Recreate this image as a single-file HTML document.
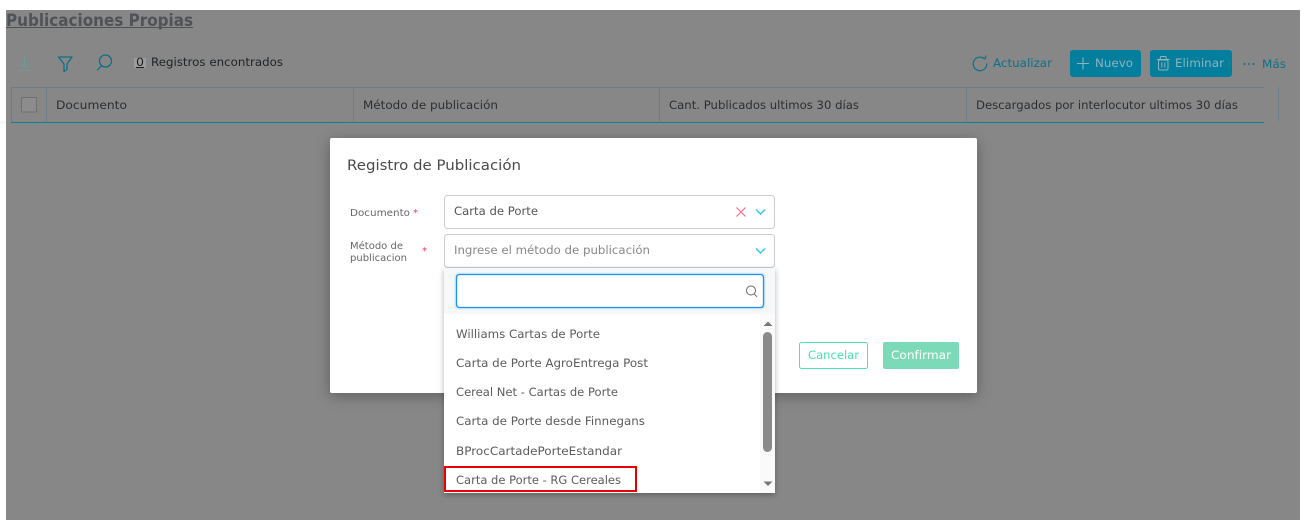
<!DOCTYPE html>
<html lang="es">
<head>
<meta charset="utf-8">
<title>Publicaciones Propias</title>
<style>
html,body{margin:0;padding:0;background:#fff;width:1307px;height:525px;overflow:hidden}
svg{display:block}
text{font-family:"DejaVu Sans",sans-serif;font-size:11.5px}
</style>
</head>
<body>
<svg width="1307" height="525" viewBox="0 0 1307 525" xmlns="http://www.w3.org/2000/svg">
<defs>
<filter id="ms" x="-10%" y="-10%" width="120%" height="125%"><feDropShadow dx="0" dy="3" stdDeviation="7" flood-color="#000" flood-opacity=".3"/></filter>
<filter id="ds" x="-10%" y="-10%" width="120%" height="120%"><feDropShadow dx="0" dy="2" stdDeviation="3" flood-color="#000" flood-opacity=".3"/></filter>
</defs>
<rect width="1307" height="525" fill="#fff"/>
<rect x="6" y="10" width="1294" height="510" fill="#878787"/>

<!-- Page title -->
<text x="6" y="26" font-weight="700" fill="#4f5357" textLength="187" lengthAdjust="spacingAndGlyphs" style="font-size:16.500px">Publicaciones Propias</text>
<rect x="6" y="27" width="187" height="1" fill="#4f5357"/>

<!-- Toolbar left -->
<g fill="none" stroke-linecap="round" stroke-linejoin="round">
<path d="M24.500 56V67M20 62.500l4.500 4.500L29 62.500M19 70.500H30" stroke="#6f989f" stroke-width="1"/>
<path d="M58.500 57H72L67 64V69.500L64 71.500V64Z" stroke="#0c7186" stroke-width="1.300"/>
<circle cx="105.500" cy="61" r="6" stroke="#0c7186" stroke-width="1.300"/>
<path d="M101.500 65.500L97.500 70" stroke="#0c7186" stroke-width="1.300"/>
</g>
<rect x="134" y="58" width="12" height="10" fill="#9b9b9b"/>
<text x="136" y="66" fill="#1f2326" textLength="8" lengthAdjust="spacingAndGlyphs">0</text>
<rect x="136" y="67" width="8" height="1" fill="#1f2326"/>
<text x="151" y="66" fill="#1f2326" textLength="132" lengthAdjust="spacingAndGlyphs">Registros encontrados</text>

<!-- Toolbar right -->
<g fill="none" stroke="#0d7288" stroke-width="1.200" stroke-linecap="round" stroke-linejoin="round">
<path d="M984.500 58.800A6.800 6.800 0 1 0 986.800 64"/>
<path d="M981.500 57.500L985 58.800L986 56"/>
</g>
<text x="993" y="67" fill="#0d7288" textLength="59" lengthAdjust="spacingAndGlyphs">Actualizar</text>
<rect x="1070" y="50" width="71" height="27" rx="3" fill="#037e9c"/>
<path d="M1083 57.500V69.500M1077 63.500H1089" stroke="#8fb3bd" stroke-width="1.100" fill="none"/>
<text x="1095" y="67" fill="#8fb3bd" textLength="38" lengthAdjust="spacingAndGlyphs">Nuevo</text>
<rect x="1150" y="50" width="82" height="27" rx="3" fill="#037e9c"/>
<g fill="none" stroke="#8fb3bd" stroke-width="1">
<rect x="1158.500" y="60" width="9.500" height="10" rx="1.500"/>
<path d="M1157 59.500H1169.500M1160 59L1160.800 56.500H1165.700L1166.500 59M1161.800 62.500V67.500M1164.800 62.500V67.500"/>
</g>
<text x="1175" y="67" fill="#8fb3bd" textLength="49" lengthAdjust="spacingAndGlyphs">Eliminar</text>
<g fill="#0d7288"><circle cx="1244.500" cy="64" r="1"/><circle cx="1249" cy="64" r="1"/><circle cx="1253.500" cy="64" r="1"/></g>
<text x="1262" y="68" fill="#0d7288" textLength="24" lengthAdjust="spacingAndGlyphs">Más</text>

<!-- Table header -->
<rect x="11" y="87" width="1253" height="1" fill="#6d7d85"/>
<rect x="11" y="122" width="1253" height="1" fill="#0b8099"/>
<g fill="#6d7d85">
<rect x="11" y="87" width="1" height="35"/>
<rect x="46" y="87" width="1" height="35"/>
<rect x="353" y="87" width="1" height="35"/>
<rect x="659" y="87" width="1" height="35"/>
<rect x="966" y="87" width="1" height="35"/>
<rect x="1278" y="87" width="1" height="34"/>
</g>
<rect x="21.500" y="97.500" width="15" height="14.500" rx="1" fill="#8c8c8c" stroke="#6f6f6f"/>
<g fill="#2b2f33">
<text x="56" y="109" textLength="71" lengthAdjust="spacingAndGlyphs">Documento</text>
<text x="363" y="109" textLength="135" lengthAdjust="spacingAndGlyphs">Método de publicación</text>
<text x="669" y="109" textLength="190" lengthAdjust="spacingAndGlyphs">Cant. Publicados ultimos 30 días</text>
<text x="976" y="109" textLength="262" lengthAdjust="spacingAndGlyphs">Descargados por interlocutor ultimos 30 días</text>
</g>

<!-- Modal -->
<rect x="330" y="138" width="647" height="255" rx="2" fill="#fff" filter="url(#ms)"/>
<text x="347" y="170" fill="#4a4a4a" textLength="174" lengthAdjust="spacingAndGlyphs" style="font-size:14.500px">Registro de Publicación</text>

<text x="350" y="216" fill="#666" textLength="60" lengthAdjust="spacingAndGlyphs" style="font-size:10px">Documento</text>
<text x="413" y="216" fill="#f5365c" style="font-size:10px">*</text>
<text x="350" y="249" fill="#666" textLength="53" lengthAdjust="spacingAndGlyphs" style="font-size:10px">Método de</text>
<text x="350" y="261" fill="#666" textLength="57" lengthAdjust="spacingAndGlyphs" style="font-size:10px">publicacion</text>
<text x="422" y="254" fill="#f5365c" style="font-size:10px">*</text>

<rect x="444.500" y="195.500" width="330" height="33" rx="3" fill="#fff" stroke="#c9cdd1"/>
<text x="454" y="215" fill="#555" textLength="84" lengthAdjust="spacingAndGlyphs">Carta de Porte</text>
<path d="M736.500 207.500L745.500 216.500M745.500 207.500L736.500 216.500" stroke="#f5658a" stroke-width="1.100" fill="none"/>
<path d="M756 209.500L760.500 214L765 209.500" stroke="#2cc5ee" stroke-width="1.400" fill="none"/>

<rect x="444.500" y="234.500" width="330" height="33" rx="3" fill="#fff" stroke="#c9cdd1"/>
<text x="454" y="254" fill="#888" textLength="196" lengthAdjust="spacingAndGlyphs">Ingrese el método de publicación</text>
<path d="M756 248.500L760.500 253L765 248.500" stroke="#2cc5ee" stroke-width="1.400" fill="none"/>

<!-- Buttons -->
<rect x="799.500" y="342.500" width="68" height="26" rx="2" fill="#fff" stroke="#45e6b4"/>
<text x="808" y="359" fill="#45e0b0" textLength="51" lengthAdjust="spacingAndGlyphs">Cancelar</text>
<rect x="883" y="342" width="76" height="27" rx="2" fill="#7ddab9"/>
<text x="891" y="359" fill="#fff" textLength="60" lengthAdjust="spacingAndGlyphs">Confirmar</text>

<!-- Dropdown -->
<rect x="444" y="268" width="331" height="225" fill="#fff" filter="url(#ds)"/>
<rect x="444" y="268" width="331" height="46" fill="#f7f8fa"/>
<rect x="454.500" y="272.500" width="311" height="37" rx="4" fill="#d6ebfb"/>
<rect x="456.500" y="274.500" width="307" height="33" rx="3" fill="#fff" stroke="#1c93ea" stroke-width="1.300"/>
<circle cx="751" cy="290.500" r="4.500" fill="none" stroke="#666" stroke-width="1"/>
<path d="M754.200 293.800L757 296.800" stroke="#666" stroke-width="1" fill="none"/>

<rect x="760" y="314" width="15" height="179" fill="#fafafa"/>
<path d="M763.500 326L768 321.500L772.500 326Z" fill="#777"/>
<rect x="763" y="332" width="9" height="120" rx="4.500" fill="#8a8a8a"/>
<path d="M763.500 481.500L768 486L772.500 481.500Z" fill="#777"/>

<g fill="#5c5c5c">
<text x="456" y="338" textLength="144" lengthAdjust="spacingAndGlyphs">Williams Cartas de Porte</text>
<text x="456" y="367" textLength="192" lengthAdjust="spacingAndGlyphs">Carta de Porte AgroEntrega Post</text>
<text x="456" y="396" textLength="162" lengthAdjust="spacingAndGlyphs">Cereal Net - Cartas de Porte</text>
<text x="456" y="425" textLength="189" lengthAdjust="spacingAndGlyphs">Carta de Porte desde Finnegans</text>
<text x="456" y="455" textLength="166" lengthAdjust="spacingAndGlyphs">BProcCartadePorteEstandar</text>
<text x="456" y="484" textLength="165" lengthAdjust="spacingAndGlyphs">Carta de Porte - RG Cereales</text>
</g>
<rect x="445" y="467" width="191" height="24" fill="none" stroke="#e60000" stroke-width="2"/>
</svg>
</body>
</html>
